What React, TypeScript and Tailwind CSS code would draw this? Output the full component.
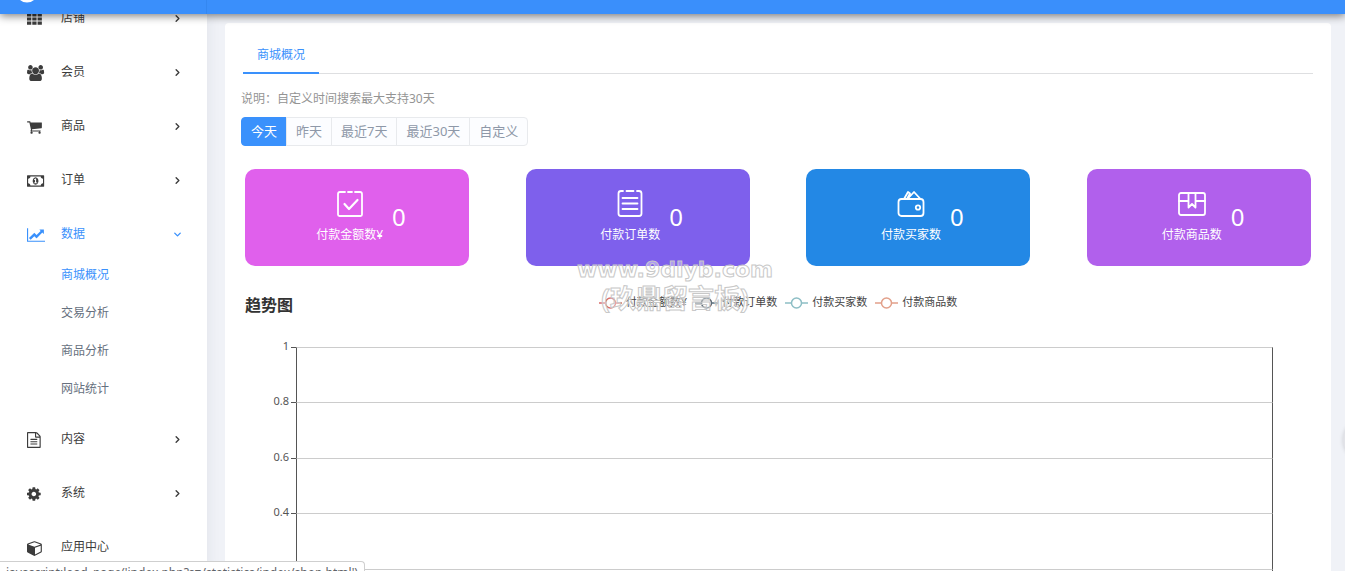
import React, { useState } from 'react';
import { ChevronDown, ChevronRight } from 'lucide-react';

interface MenuItem {
  label: string;
  viewBox: string;
  path: string;
  children?: string[];
}

const MENU: MenuItem[] = [
  {
    label: '店铺',
    viewBox: '0 0 1664 1792',
    path: 'M0 256h480v352H0zM592 256h480v352H592zM1184 256h480v352h-480zM0 720h480v352H0zM592 720h480v352H592zM1184 720h480v352h-480zM0 1184h480v352H0zM592 1184h480v352H592zM1184 1184h480v352h-480z',
  },
  {
    label: '会员',
    viewBox: '0 0 1920 1792',
    path: 'M593 896q-162 5-265 128h-134q-82 0-138-40.5t-56-118.5q0-353 124-353 6 0 43.5 21t97.5 42.5 119 21.5q67 0 133-23-5 37-5 66 0 139 81 256zm1071 637q0 120-73 189.5t-194 69.5h-874q-121 0-194-69.5t-73-189.5q0-53 3.5-103.5t14-109 26.5-108.5 43-97.5 62-81 85.5-53.5 111.5-20q10 0 43 21.5t73 48 107 48 135 21.5 135-21.5 107-48 73-48 43-21.5q61 0 111.5 20t85.5 53.5 62 81 43 97.5 26.5 108.5 14 109 3.5 103.5zm-1024-1277q0 106-75 181t-181 75-181-75-75-181 75-181 181-75 181 75 75 181zm704 384q0 159-112.5 271.5t-271.5 112.5-271.5-112.5-112.5-271.5 112.5-271.5 271.5-112.5 271.5 112.5 112.5 271.5zm576 225q0 78-56 118.5t-138 40.5h-134q-103-123-265-128 81-117 81-256 0-29-5-66 66 23 133 23 59 0 119-21.5t97.5-42.5 43.5-21q124 0 124 353zm-128-609q0 106-75 181t-181 75-181-75-75-181 75-181 181-75 181 75 75 181z',
  },
  {
    label: '商品',
    viewBox: '64 0 1664 1792',
    path: 'M704 1536q0 52-38 90t-90 38-90-38-38-90 38-90 90-38 90 38 38 90zm896 0q0 52-38 90t-90 38-90-38-38-90 38-90 90-38 90 38 38 90zm128-1088v512q0 24-16.5 42.5t-40.5 21.5l-1044 122q13 60 13 70 0 16-24 64h920q26 0 45 19t19 45-19 45-45 19h-1024q-26 0-45-19t-19-45q0-11 8-31.5t16-36 21.5-40 15.5-29.5l-177-823h-204q-26 0-45-19t-19-45 19-45 45-19h256q16 0 28.5 6.5t19.5 15.5 13 24.5 8 26 5.5 29.5 4.5 26h1201q26 0 45 19t19 45z',
  },
  {
    label: '订单',
    viewBox: '0 0 1920 1792',
    path: 'M768 1152h384v-96h-128v-448h-114l-148 137 77 80q42-37 55-57h2v288h-128v96zm512-256q0 70-21 142t-59.5 134-101.5 101-138 39-138-39-101.5-101-59.5-134-21-142 21-142 59.5-134 101.5-101 138-39 138 39 101.5 101 59.5 134 21 142zm512 256v-512q-106 0-181-75t-75-181h-1152q0 106-75 181t-181 75v512q106 0 181 75t75 181h1152q0-106 75-181t181-75zm128-832v1152q0 26-19 45t-45 19h-1792q-26 0-45-19t-19-45v-1152q0-26 19-45t45-19h1792q26 0 45 19t19 45z',
  },
  {
    label: '数据',
    viewBox: '0 0 2048 1792',
    path: 'M2048 1536v128h-2048v-1536h128v1408h1920zm-128-1248v435q0 21-19.5 29.5t-35.5-7.5l-121-121-633 633q-10 10-23 10t-23-10l-233-233-416 416-192-192 585-585q10-10 23-10t23 10l233 233 464-464-121-121q-16-16-7.5-35.5t29.5-19.5h435q14 0 23 9t9 23z',
    children: ['商城概况', '交易分析', '商品分析', '网站统计'],
  },
  {
    label: '内容',
    viewBox: '128 0 1536 1792',
    path: 'M1596 380q28 28 48 76t20 88v1152q0 40-28 68t-68 28h-1344q-40 0-68-28t-28-68v-1600q0-40 28-68t68-28h896q40 0 88 20t76 48zm-444-244v376h376q-10-29-22-41l-313-313q-12-12-41-22zm384 1528v-1024h-416q-40 0-68-28t-28-68v-416h-768v1536h1280zm-1024-864q0-14 9-23t23-9h704q14 0 23 9t9 23v64q0 14-9 23t-23 9h-704q-14 0-23-9t-9-23v-64zm736 224q14 0 23 9t9 23v64q0 14-9 23t-23 9h-704q-14 0-23-9t-9-23v-64q0-14 9-23t23-9h704zm0 256q14 0 23 9t9 23v64q0 14-9 23t-23 9h-704q-14 0-23-9t-9-23v-64q0-14 9-23t23-9h704z',
  },
  {
    label: '系统',
    viewBox: '128 0 1536 1792',
    path: 'M1152 896q0-106-75-181t-181-75-181 75-75 181 75 181 181 75 181-75 75-181zm512-109v222q0 12-8 23t-20 13l-185 28q-19 54-39 91 35 50 107 138 10 12 10 25t-9 23q-27 37-99 108t-94 71q-12 0-26-9l-138-108q-44 23-91 38-16 136-29 186-7 28-36 28h-222q-14 0-24.5-8.5t-11.5-21.5l-28-184q-49-16-90-37l-141 107q-10 9-25 9-14 0-25-11-126-114-165-168-7-10-7-23 0-12 8-23 15-21 51-66.5t54-70.5q-27-50-41-99l-183-27q-13-2-21-12.5t-8-23.5v-222q0-12 8-23t19-13l186-28q14-46 39-92-40-57-107-138-10-12-10-24 0-10 9-23 26-36 98.5-107.5t94.5-71.5q13 0 26 10l138 107q44-23 91-38 16-136 29-186 7-28 36-28h222q14 0 24.5 8.5t11.5 21.5l28 184q49 16 90 37l142-107q9-9 24-9 13 0 25 10 129 119 165 170 7 8 7 22 0 12-8 23-15 21-51 66.5t-54 70.5q26 50 41 98l183 28q13 2 21 12.5t8 23.5z',
  },
  {
    label: '应用中心',
    viewBox: '0 0 1664 1792',
    path: 'M896 1629l640-349v-636l-640 233v752zm-64-865l698-254-698-254-698 254zm832-252v768q0 35-18 65t-49 47l-704 384q-28 16-61 16t-61-16l-704-384q-31-17-49-47t-18-65v-768q0-40 23-73t61-47l704-256q22-8 44-8t44 8l704 256q38 14 61 47t23 73z',
  },
];

const RANGES = ['今天', '昨天', '最近7天', '最近30天', '自定义'];

const CARDS = [
  {
    label: '付款金额数¥',
    value: 0,
    color: 'bg-[#e060ec]',
    icon: (
      <>
        <path d="M10 4H5Q3 4 3 6v20.500Q3 28 4.500 28h21Q27 28 27 26.500V6q0-2-2-2h-5M13 4h4" />
        <path d="m9.500 16 4.500 5 8.500-9" strokeWidth="2.2" />
      </>
    ),
  },
  {
    label: '付款订单数',
    value: 0,
    color: 'bg-[#7e60ec]',
    icon: (
      <>
        <path d="M8 3H6Q3.500 3 3.500 5.500v20Q3.500 28 6 28h18q2.500 0 2.500-2.500v-20Q26.500 3 24 3h-2M11.500 3h7" />
        <path d="M7.500 10h15M7.500 15.500h15M7.500 21h15" />
      </>
    ),
  },
  {
    label: '付款买家数',
    value: 0,
    color: 'bg-[#2388e5]',
    icon: (
      <>
        <rect x="2.500" y="11" width="25" height="17" rx="3" />
        <path d="m8 11 4-7 2 1.500M11.500 11 18 4l6.500 7M14 5.500 11 11" />
        <circle cx="22" cy="19.500" r="2.200" />
      </>
    ),
  },
  {
    label: '付款商品数',
    value: 0,
    color: 'bg-[#b160ec]',
    icon: (
      <>
        <rect x="2" y="5" width="26" height="22" rx="2" />
        <path d="M2 13h9.500M18.500 13H28M11.500 5v14.500l3.500-3.500 3.500 3.500V5" />
      </>
    ),
  },
];

const LEGEND = [
  { label: '付款金额数¥', color: 'text-[#d86d69]' },
  { label: '付款订单数', color: 'text-[#5d6d79]' },
  { label: '付款买家数', color: 'text-[#8dbec5]' },
  { label: '付款商品数', color: 'text-[#e2a08a]' },
];

const TICKS = ['1', '0.8', '0.6', '0.4', '0.2'];

const Sidebar: React.FC = () => {
  const [open, setOpen] = useState('数据');

  return (
    <aside className="relative z-10 w-[207px] shrink-0 overflow-hidden bg-white shadow-[0_0_14px_rgba(40,50,80,0.08)]">
      <nav className="-mt-[17px] flex flex-col gap-3">
        {MENU.map((item) => {
          const active = item.label === open;
          return (
            <div key={item.label}>
              <button
                type="button"
                onClick={() => setOpen(item.label)}
                className={`flex h-[42px] w-full items-center pl-[27px] pr-6 text-left ${
                  active ? 'text-[#3a91fc]' : 'text-[#3c3c3c]'
                }`}
              >
                <svg
                  viewBox={item.viewBox}
                  preserveAspectRatio="xMinYMid"
                  fill="currentColor"
                  className="mt-0.5 h-4 w-[18px]"
                >
                  <path d={item.path} />
                </svg>
                <span className="ml-4 flex-1">{item.label}</span>
                {item.label !== '应用中心' &&
                  (active ? <ChevronDown size={11} strokeWidth={3} /> : <ChevronRight size={11} strokeWidth={3} />)}
              </button>
              {active && item.children && (
                <div className="-mb-0.5 pt-px">
                  {item.children.map((child, i) => (
                    <a
                      key={child}
                      href="#"
                      className={`flex h-[38px] items-center pl-[61px] ${
                        i === 0 ? 'text-[#3a91fc]' : 'text-[#66707e]'
                      }`}
                    >
                      {child}
                    </a>
                  ))}
                </div>
              )}
            </div>
          );
        })}
      </nav>
    </aside>
  );
};

const Legend: React.FC = () => (
  <ul className="flex gap-2 text-[11px] leading-[18px] text-[#444]">
    {LEGEND.map((item) => (
      <li key={item.label} className="flex items-center gap-1">
        <svg viewBox="0 0 23 14" fill="none" stroke="currentColor" strokeWidth="1.5" className={`h-3.5 w-[23px] ${item.color}`}>
          <path d="M0 8h6M17 8h6" />
          <circle cx="11.500" cy="8" r="5" />
        </svg>
        {item.label}
      </li>
    ))}
  </ul>
);

const Chart: React.FC = () => (
  <div className="mx-1 mt-[30px] flex h-[277px] flex-col pr-[38px]">
    {TICKS.map((tick) => (
      <div key={tick} className="flex flex-1 items-start">
        <span className="-mt-[9px] w-11 text-right text-[11px] leading-4 text-[#555]">{tick}</span>
        <span className="ml-0.5 w-[5px] border-t border-[#555]" />
        <div className="flex-1 self-stretch border-x border-t border-x-[#555] border-t-[#ccc]" />
      </div>
    ))}
  </div>
);

export default function App() {
  const [range, setRange] = useState('今天');

  return (
    <div className="relative flex h-screen flex-col overflow-hidden bg-[#f0f2f7] font-['Noto_Sans','Noto_Sans_CJK_SC',sans-serif] text-xs">
      <header className="relative z-20 h-3.5 shrink-0 bg-[#3a8ffb] shadow-[0_2px_9px_rgba(0,0,0,0.5)]">
        <div className="h-full w-[207px] overflow-hidden border-r border-[#3487f0]">
          <svg viewBox="0 0 14 3" className="ml-5 h-[3px] w-3.5 text-white">
            <path d="M0 0h14Q11 2.500 7 2.500T0 0z" fill="currentColor" />
          </svg>
        </div>
      </header>

      <div className="flex min-h-0 flex-1">
        <Sidebar />

        <main className="min-w-0 flex-1 overflow-hidden pl-[18px] pr-3.5 pt-[9px]">
          <section className="relative min-h-full rounded bg-white px-4 pt-[13px]">
            <div role="tablist" className="mx-0.5 flex border-b border-[#dedfe1]">
              <button
                type="button"
                role="tab"
                aria-selected="true"
                className="-mb-px h-[38px] border-b-2 border-[#3a91fc] px-3.5 pt-0.5 text-[#3a91fc]"
              >
                商城概况
              </button>
            </div>

            <p className="mt-[15px] leading-5 text-[#949494]">说明：自定义时间搜索最大支持30天</p>

            <div className="mt-2 flex text-[13px]">
              {RANGES.map((item) => (
                <button
                  key={item}
                  type="button"
                  onClick={() => setRange(item)}
                  className={`-ml-px h-[29px] border px-[9px] first:ml-0 first:rounded-l last:rounded-r ${
                    item === range
                      ? 'border-[#3a91fc] bg-[#3a91fc] text-white'
                      : 'border-[#e8eaed] bg-[#fcfdff] text-[#8e98a8]'
                  }`}
                >
                  {item}
                </button>
              ))}
            </div>

            <div className="mx-1 mt-[23px] flex justify-between text-white">
              {CARDS.map((card) => (
                <div
                  key={card.label}
                  className={`flex h-[97px] w-[21%] items-center justify-center gap-[9px] rounded-[10px] pb-0.5 pl-2 ${card.color}`}
                >
                  <div className="flex flex-col items-center gap-[9px] pb-0.5 leading-4">
                    <svg
                      viewBox="0 0 30 30"
                      fill="none"
                      stroke="currentColor"
                      strokeWidth="1.8"
                      strokeLinecap="round"
                      strokeLinejoin="round"
                      className="size-[30px]"
                    >
                      {card.icon}
                    </svg>
                    {card.label}
                  </div>
                  <span className="text-2xl">{card.value}</span>
                </div>
              ))}
            </div>

            <div className="mx-1 mt-[27px] grid grid-cols-[1fr_auto_1fr] items-start">
              <h2 className="text-base font-bold leading-6 text-[#333]">趋势图</h2>
              <Legend />
            </div>

            <Chart />

            {/* Watermark */}
            <div className="pointer-events-none absolute left-[352px] top-[233px] flex flex-col items-center text-white/40 [-webkit-text-stroke:1px_#c8c8c8]">
              <span className="font-['DejaVu_Sans',sans-serif] text-[22px] font-bold leading-7">www.9dlyb.com</span>
              <span className="text-[26px] font-bold leading-7">(玖鼎留言板)</span>
            </div>
          </section>
        </main>
      </div>

      {/* Side drawer handle */}
      <div className="absolute -right-[38px] top-[420px] size-10 rounded-full bg-[#e2e3e8] shadow-[0_0_4px_rgba(0,0,0,0.15)]" />

      {/* Link status */}
      <div className="absolute bottom-0 left-0 z-30 h-2.5 overflow-hidden rounded-tr border-r border-t border-[#cfcfcf] bg-white px-1.5 text-xs leading-[22px] text-[#5f6368]">
        javascript:load_page('index.php?s=/statistics/index/shop.html')
      </div>
    </div>
  );
}
